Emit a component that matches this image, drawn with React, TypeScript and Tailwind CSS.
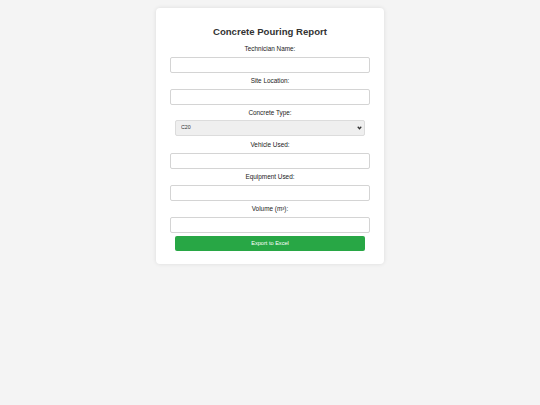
export default function App() {
  const fields = [
    { label: 'Technician Name:', type: 'input' },
    { label: 'Site Location:', type: 'input' },
    { label: 'Concrete Type:', type: 'select' },
    { label: 'Vehicle Used:', type: 'input' },
    { label: 'Equipment Used:', type: 'input' },
    { label: 'Volume (m³):', type: 'input' },
  ]

  return (
    <div
      className="min-h-[405px] w-[540px] bg-[#f4f4f4] pt-2"
      style={{ fontFamily: '"Liberation Sans", Arial, sans-serif' }}
    >
      <div className="mx-auto w-[228px] rounded-[4px] bg-white px-[14px] pt-[18px] pb-[13px] shadow-[0_0_4px_rgba(0,0,0,0.1)]">
        <h2 className="mb-[8px] text-center text-[9.6px] leading-[11px] font-bold text-[#333]">
          Concrete Pouring Report
        </h2>
        {fields.map((f) => (
          <div key={f.label}>
            <label className="block h-[8px] text-center text-[6.4px] leading-[8px] text-[#222]">{f.label}</label>
            {f.type === 'input' ? (
              <input className="mt-[4px] mb-[4px] block h-[16px] w-[200px] rounded-[2px] border border-[#d4d4d4] bg-white" />
            ) : (
              <div className="relative mx-auto mt-[3px] mb-[5px] h-[16px] w-[190px]">
                <select className="block h-[16px] w-full appearance-none rounded-[2px] border border-[#dcdcdc] bg-[#efefef] pl-[5px] text-[5.3px] text-[#333] outline-none">
                  <option>C20</option>
                </select>
                <svg
                  className="pointer-events-none absolute top-[6px] right-[3px] h-[4px] w-[5px]"
                  viewBox="0 0 10 8"
                >
                  <path d="M1.5 1.5 L5 5.5 L8.5 1.5" fill="none" stroke="#333" strokeWidth="2.4" />
                </svg>
              </div>
            )}
          </div>
        ))}
        <button className="mx-auto mt-[-1px] block h-[15px] w-[190px] rounded-[2px] bg-[#28a745] text-[5.6px] text-white">
          Export to Excel
        </button>
      </div>
    </div>
  )
}
